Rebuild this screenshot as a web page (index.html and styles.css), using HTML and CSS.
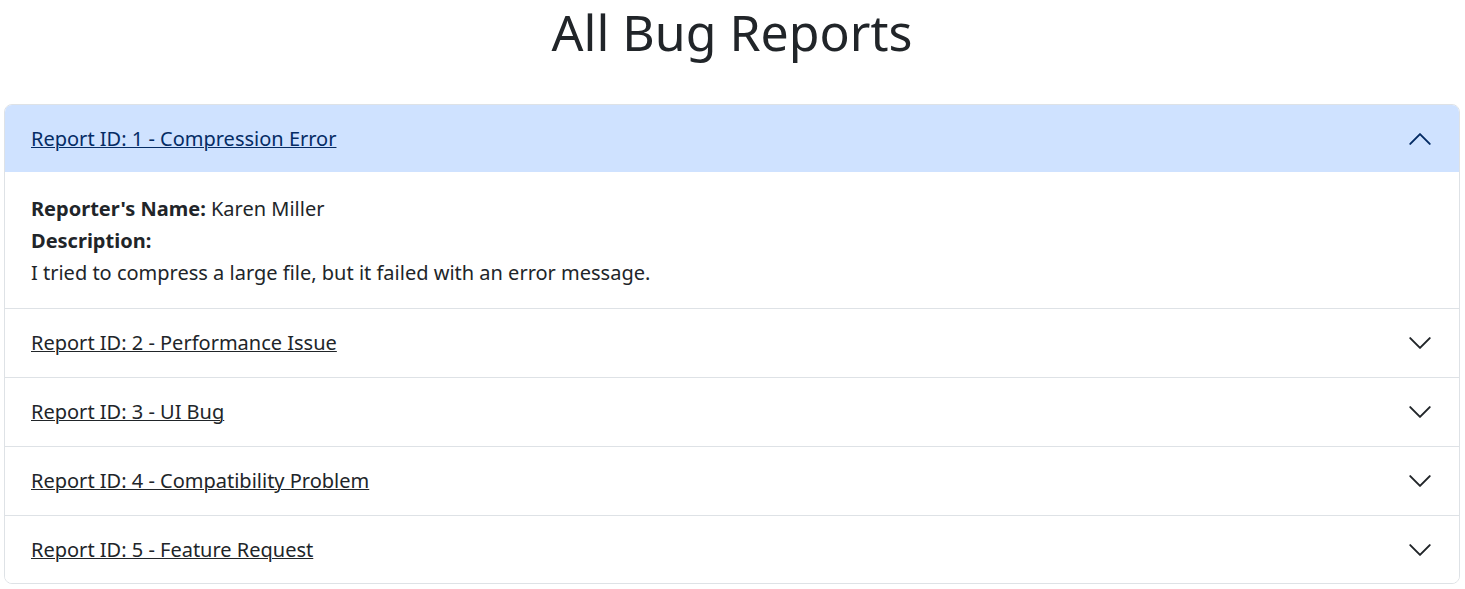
FILE: index.html
```html
<!DOCTYPE html>
<html lang="en">
<head>
<meta charset="utf-8">
<meta name="viewport" content="width=device-width, initial-scale=1">
<title>All Bug Reports</title>
<link rel="stylesheet" href="styles.css">
</head>
<body>
<main class="page">
  <h1 class="title">All Bug Reports</h1>
  <div class="accordion">
    <section class="item">
      <h2 class="header"><button class="toggle open" type="button" aria-expanded="true" aria-controls="report-1"><span class="label">Report ID: 1 - Compression Error</span><svg class="chevron" viewBox="0 0 16 16" aria-hidden="true"><path d="M2 5L8 11L14 5"/></svg></button></h2>
      <div class="body" id="report-1">
        <strong>Reporter's Name:</strong> Karen Miller<br>
        <strong>Description:</strong><br>
        I tried to compress a large file, but it failed with an error message.
      </div>
    </section>
    <section class="item">
      <h2 class="header"><button class="toggle" type="button" aria-expanded="false"><span class="label">Report ID: 2 - Performance Issue</span><svg class="chevron" viewBox="0 0 16 16" aria-hidden="true"><path d="M2 5L8 11L14 5"/></svg></button></h2>
    </section>
    <section class="item">
      <h2 class="header"><button class="toggle" type="button" aria-expanded="false"><span class="label">Report ID: 3 - UI Bug</span><svg class="chevron" viewBox="0 0 16 16" aria-hidden="true"><path d="M2 5L8 11L14 5"/></svg></button></h2>
    </section>
    <section class="item">
      <h2 class="header"><button class="toggle" type="button" aria-expanded="false"><span class="label">Report ID: 4 - Compatibility Problem</span><svg class="chevron" viewBox="0 0 16 16" aria-hidden="true"><path d="M2 5L8 11L14 5"/></svg></button></h2>
    </section>
    <section class="item">
      <h2 class="header"><button class="toggle" type="button" aria-expanded="false"><span class="label">Report ID: 5 - Feature Request</span><svg class="chevron" viewBox="0 0 16 16" aria-hidden="true"><path d="M2 5L8 11L14 5"/></svg></button></h2>
    </section>
  </div>
</main>
</body>
</html>
```
FILE: styles.css
```css
* { box-sizing: border-box; }

body {
  margin: 0;
  background: #fff;
  color: #212529;
  font-family: "Noto Sans", sans-serif;
  font-size: 20px;
  line-height: 32px;
}

.page { padding: 0 5px 5px 4px; }

.title {
  margin: 0 0 40px;
  font-size: 50px;
  font-weight: 400;
  line-height: 64px;
  text-align: center;
}

.accordion {
  border: 1px solid #dee2e6;
  border-radius: 8px;
  overflow: hidden;
}

.item + .item { border-top: 1px solid #dee2e6; }

.header {
  margin: 0;
  font-size: 20px;
  font-weight: 400;
}

.toggle {
  display: flex;
  align-items: center;
  width: 100%;
  padding: 18px 26px;
  border: 0;
  background: #fff;
  color: #212529;
  font: inherit;
  text-align: left;
  cursor: pointer;
}

.open,
.item:last-child .toggle { padding-bottom: 17px; }

.open {
  background: #cfe2ff;
  color: #052c65;
}

.label {
  text-decoration: underline;
  text-decoration-thickness: 1px;
}

.chevron {
  width: 26px;
  height: 26px;
  margin-left: auto;
  fill: none;
  stroke: currentColor;
  stroke-width: 1.2;
  stroke-linecap: round;
  stroke-linejoin: round;
}

.open .chevron { transform: rotate(180deg); }

.body { padding: 21px 26px 19px; }
```
